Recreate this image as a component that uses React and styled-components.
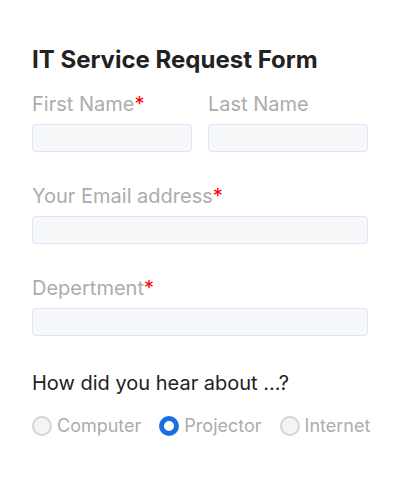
import styled, { createGlobalStyle } from "styled-components";
import { useState } from "react";

const GlobalStyle = createGlobalStyle`
  body {
    margin: 0;
    background: #ffffff;
    font-family: Inter, "Noto Sans", sans-serif;
  }
`;

const Form = styled.form`
  padding: 45px 32px 0;
  display: flex;
  flex-direction: column;
`;

const Title = styled.h2`
  margin: 0 0 17px;
  font-size: 24px;
  line-height: 30px;
  font-weight: 700;
  color: #222222;
`;

const Row = styled.div`
  display: flex;
  gap: 16px;
`;

const Field = styled.div`
  flex: 1;
  display: flex;
  flex-direction: column;
  margin-bottom: ${(p) => p.$gap || 0}px;
`;

const Label = styled.label`
  font-size: 20px;
  line-height: 24px;
  color: #acacac;
  margin-bottom: 8px;
  .star {
    color: #ff0000;
  }
`;

const Input = styled.input`
  box-sizing: border-box;
  width: 100%;
  height: 28px;
  border: 1px solid #dfe3fb;
  border-radius: 4px;
  background: #f7f8fa;
  outline: none;
`;

const Question = styled.p`
  margin: 0 0 20px;
  font-size: 20px;
  line-height: 24px;
  color: #222222;
`;

const Options = styled.div`
  display: flex;
  align-items: center;
  gap: 18px;
`;

const Option = styled.label`
  display: flex;
  align-items: center;
  gap: 5px;
  font-size: 18px;
  line-height: 22px;
  color: #acacac;
  cursor: pointer;
  input {
    appearance: none;
    margin: 0;
    width: 20px;
    height: 20px;
    border-radius: 50%;
    border: 2px solid #d4d4d4;
    background: #f3f4f6;
    box-sizing: border-box;
  }
  input:checked {
    border: 5px solid #1a6fe0;
    background: #ffffff;
  }
`;

function App() {
  const [source, setSource] = useState("projector");
  const options = [
    ["computer", "Computer"],
    ["projector", "Projector"],
    ["internet", "Internet"],
  ];

  return (
    <>
      <GlobalStyle />
      <Form onSubmit={(e) => e.preventDefault()}>
        <Title>IT Service Request Form</Title>
        <Row>
          <Field $gap={32}>
            <Label>
              First Name<span className="star">*</span>
            </Label>
            <Input type="text" />
          </Field>
          <Field $gap={32}>
            <Label>Last Name</Label>
            <Input type="text" />
          </Field>
        </Row>
        <Field $gap={32}>
          <Label>
            Your Email address<span className="star">*</span>
          </Label>
          <Input type="email" />
        </Field>
        <Field $gap={35}>
          <Label>
            Depertment<span className="star">*</span>
          </Label>
          <Input type="text" />
        </Field>
        <Question>How did you hear about ...?</Question>
        <Options>
          {options.map(([value, text]) => (
            <Option key={value}>
              <input
                type="radio"
                name="source"
                value={value}
                checked={source === value}
                onChange={() => setSource(value)}
              />
              {text}
            </Option>
          ))}
        </Options>
      </Form>
    </>
  );
}

export default App;
